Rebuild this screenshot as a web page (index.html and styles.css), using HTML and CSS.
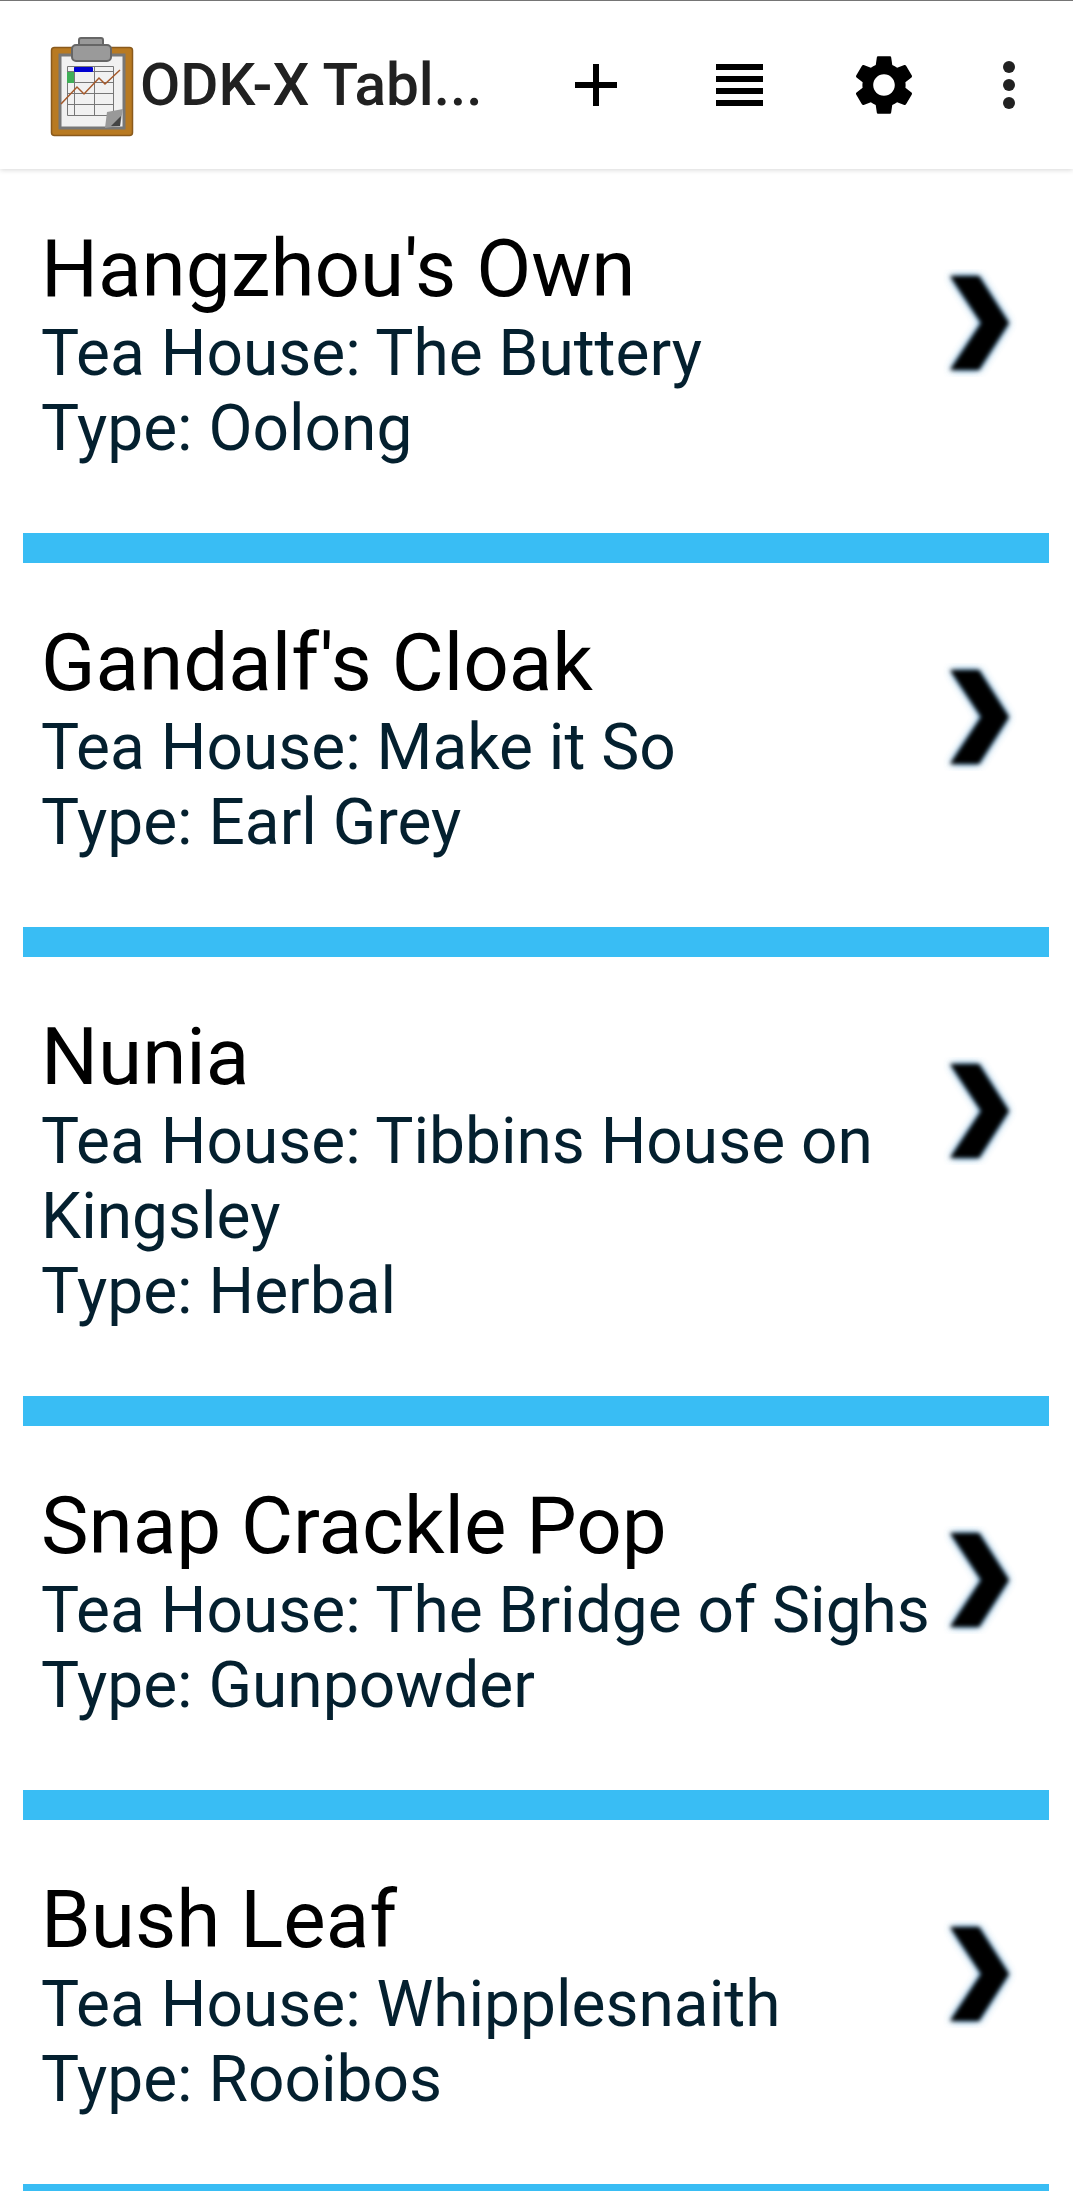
FILE: index.html
```html
<!DOCTYPE html>
<html>
	<head>
		<meta charset="utf-8">
		<title>ODK-X Tables</title>
		<link rel="stylesheet" href="styles.css">
	</head>
	<body>
		<svg class="defs" width="0" height="0">
			<defs>
				<g id="chevron">
					<polygon class="chevron-glow" points="7,7 36,7 66,54 36,101 7,101 38,54"/>
					<polygon class="chevron-core" points="7,7 36,7 66,54 36,101 7,101 38,54"/>
				</g>
			</defs>
		</svg>
		<!-- top bar -->
		<div id="bar">
			<svg class="logo" width="86" height="100" viewBox="0 0 86 100">
				<rect x="2.500" y="10.500" width="81" height="88" rx="3" fill="#b87a22" stroke="#8a5a1c" stroke-width="1.500"/>
				<rect x="11" y="18" width="64" height="73" fill="#f1f1f1" stroke="#777" stroke-width="3"/>
				<rect x="30" y="1" width="24" height="12" rx="2" fill="#999" stroke="#666" stroke-width="2"/>
				<rect x="23" y="8" width="39" height="16" rx="4" fill="#9a9a9a" stroke="#666" stroke-width="2"/>
				<path d="M18.500 29.500H64.500V78.500H18.500ZM18.500 34.500H64.500M18.500 45.500H64.500M18.500 56.500H64.500M18.500 67.500H64.500M25.500 29.500V78.500M45.500 29.500V78.500" fill="none" stroke="#777" stroke-width="1"/>
				<rect x="25" y="30" width="19" height="5" rx="1" fill="#0000d0"/>
				<rect x="18" y="35" width="7" height="11" fill="#3fae56"/>
				<polyline points="12,67 28,50 35,57 50,41 56,47 71,33" fill="none" stroke="#a5592a" stroke-width="1.500"/>
				<polygon points="56,91 58,75 74,72 71,89" fill="#999"/>
				<polygon points="62,89 72,79 71,89" fill="#444"/>
			</svg>
			<div class="bar-title">ODK-X Tabl...</div>
			<svg class="plus" width="42" height="42" viewBox="0 0 42 42">
				<path d="M18 0h6v18h18v6H24v18h-6V24H0v-6h18z"/>
			</svg>
			<svg class="lines" width="47" height="42" viewBox="0 0 47 42">
				<path d="M0 0h47v6H0zM0 12h47v6H0zM0 24h47v6H0zM0 36h47v6H0z"/>
			</svg>
			<svg class="gear" width="72" height="72" viewBox="0 0 24 24">
				<path d="M19.140 12.940c.04-.3.060-.61.060-.94 0-.32-.020-.64-.070-.94l2.030-1.580c.18-.14.230-.41.120-.61l-1.920-3.320c-.12-.22-.37-.29-.59-.22l-2.390.96c-.5-.38-1.030-.7-1.620-.94l-.36-2.540c-.04-.24-.24-.41-.48-.41h-3.840c-.24 0-.43.170-.47.410l-.36 2.540c-.59.240-1.130.570-1.620.94l-2.390-.96c-.22-.080-.47 0-.59.220L2.740 8.870c-.12.210-.08.470.12.610l2.030 1.580c-.05.3-.09.630-.09.94s.02.640.07.940l-2.030 1.580c-.18.140-.23.410-.12.610l1.920 3.320c.12.220.37.290.59.220l2.390-.96c.5.380 1.030.7 1.620.94l.36 2.540c.05.240.24.410.48.410h3.840c.24 0 .44-.17.470-.41l.36-2.540c.59-.24 1.130-.56 1.620-.94l2.390.96c.22.080.47 0 .59-.22l1.920-3.320c.12-.22.070-.47-.12-.61l-2.010-1.580zM12 15.600c-1.980 0-3.600-1.620-3.600-3.600s1.620-3.600 3.600-3.600 3.600 1.620 3.600 3.600-1.620 3.600-3.600 3.600z"/>
			</svg>
			<div class="dots"><span></span><span></span><span></span></div>
		</div>
		<!-- tea list -->
		<div id="liebiao">
			<div class="item">
				<div class="item-text">
					<div class="name">Hangzhou's Own</div>
					<div class="sub">Tea House: The Buttery</div>
					<div class="sub">Type: Oolong</div>
				</div>
				<svg class="arrow" width="74" height="108" viewBox="0 0 74 108"><use href="#chevron"/></svg>
			</div>
			<div class="item">
				<div class="item-text">
					<div class="name">Gandalf's Cloak</div>
					<div class="sub">Tea House: Make it So</div>
					<div class="sub">Type: Earl Grey</div>
				</div>
				<svg class="arrow" width="74" height="108" viewBox="0 0 74 108"><use href="#chevron"/></svg>
			</div>
			<div class="item">
				<div class="item-text">
					<div class="name">Nunia</div>
					<div class="sub">Tea House: Tibbins House on Kingsley</div>
					<div class="sub">Type: Herbal</div>
				</div>
				<svg class="arrow" width="74" height="108" viewBox="0 0 74 108"><use href="#chevron"/></svg>
			</div>
			<div class="item">
				<div class="item-text">
					<div class="name">Snap Crackle Pop</div>
					<div class="sub">Tea House: The Bridge of Sighs</div>
					<div class="sub">Type: Gunpowder</div>
				</div>
				<svg class="arrow" width="74" height="108" viewBox="0 0 74 108"><use href="#chevron"/></svg>
			</div>
			<div class="item">
				<div class="item-text">
					<div class="name">Bush Leaf</div>
					<div class="sub">Tea House: Whipplesnaith</div>
					<div class="sub">Type: Rooibos</div>
				</div>
				<svg class="arrow" width="74" height="108" viewBox="0 0 74 108"><use href="#chevron"/></svg>
			</div>
		</div>
	</body>
</html>
```

FILE: styles.css
```css
html,
body,
div {
	margin: 0;
	padding: 0;
}
html,
body {
	height: 2191px;
	overflow: hidden;
	background-color: #fff;
}
body {
	font-family: Roboto, sans-serif;
}
.defs {
	display: block;
	height: 0;
}
#bar {
	height: 168px;
	display: flex;
	align-items: center;
	border-top: 1px solid #757575;
	box-shadow: 0 1px 5px rgba(0, 0, 0, 0.16);
	position: relative;
}
.logo {
	margin-left: 49px;
	margin-right: 5px;
	margin-top: 4px;
	flex: none;
}
.bar-title {
	width: 435px;
	flex: none;
	font-size: 58.500px;
	font-weight: 500;
	color: #212121;
}
.plus,
.lines {
	fill: #000;
	flex: none;
}
.lines {
	margin-left: 99px;
}
.gear {
	fill: #000;
	flex: none;
	margin-left: 85px;
}
.dots {
	display: flex;
	flex-direction: column;
	gap: 6px;
	margin-left: 83px;
}
.dots span {
	width: 12px;
	height: 12px;
	border-radius: 50%;
	background-color: #212121;
}
#liebiao {
	padding: 0 24px 0 23px;
}
.item {
	display: flex;
	align-items: flex-start;
	padding: 53px 0 67px 18px;
	border-bottom: 30px solid #39bdf4;
}
.item-text {
	width: 902px;
	flex: none;
}
.name {
	font-size: 80px;
	line-height: 94px;
	color: #000;
}
.sub {
	font-size: 64px;
	line-height: 75px;
	color: #04202f;
}
.arrow {
	flex: none;
	margin-top: 47px;
}
.chevron-glow {
	fill: #3a8fcc;
	filter: blur(4px);
	opacity: 0.85;
}
.chevron-core {
	fill: #000;
	filter: blur(2px);
}
```
